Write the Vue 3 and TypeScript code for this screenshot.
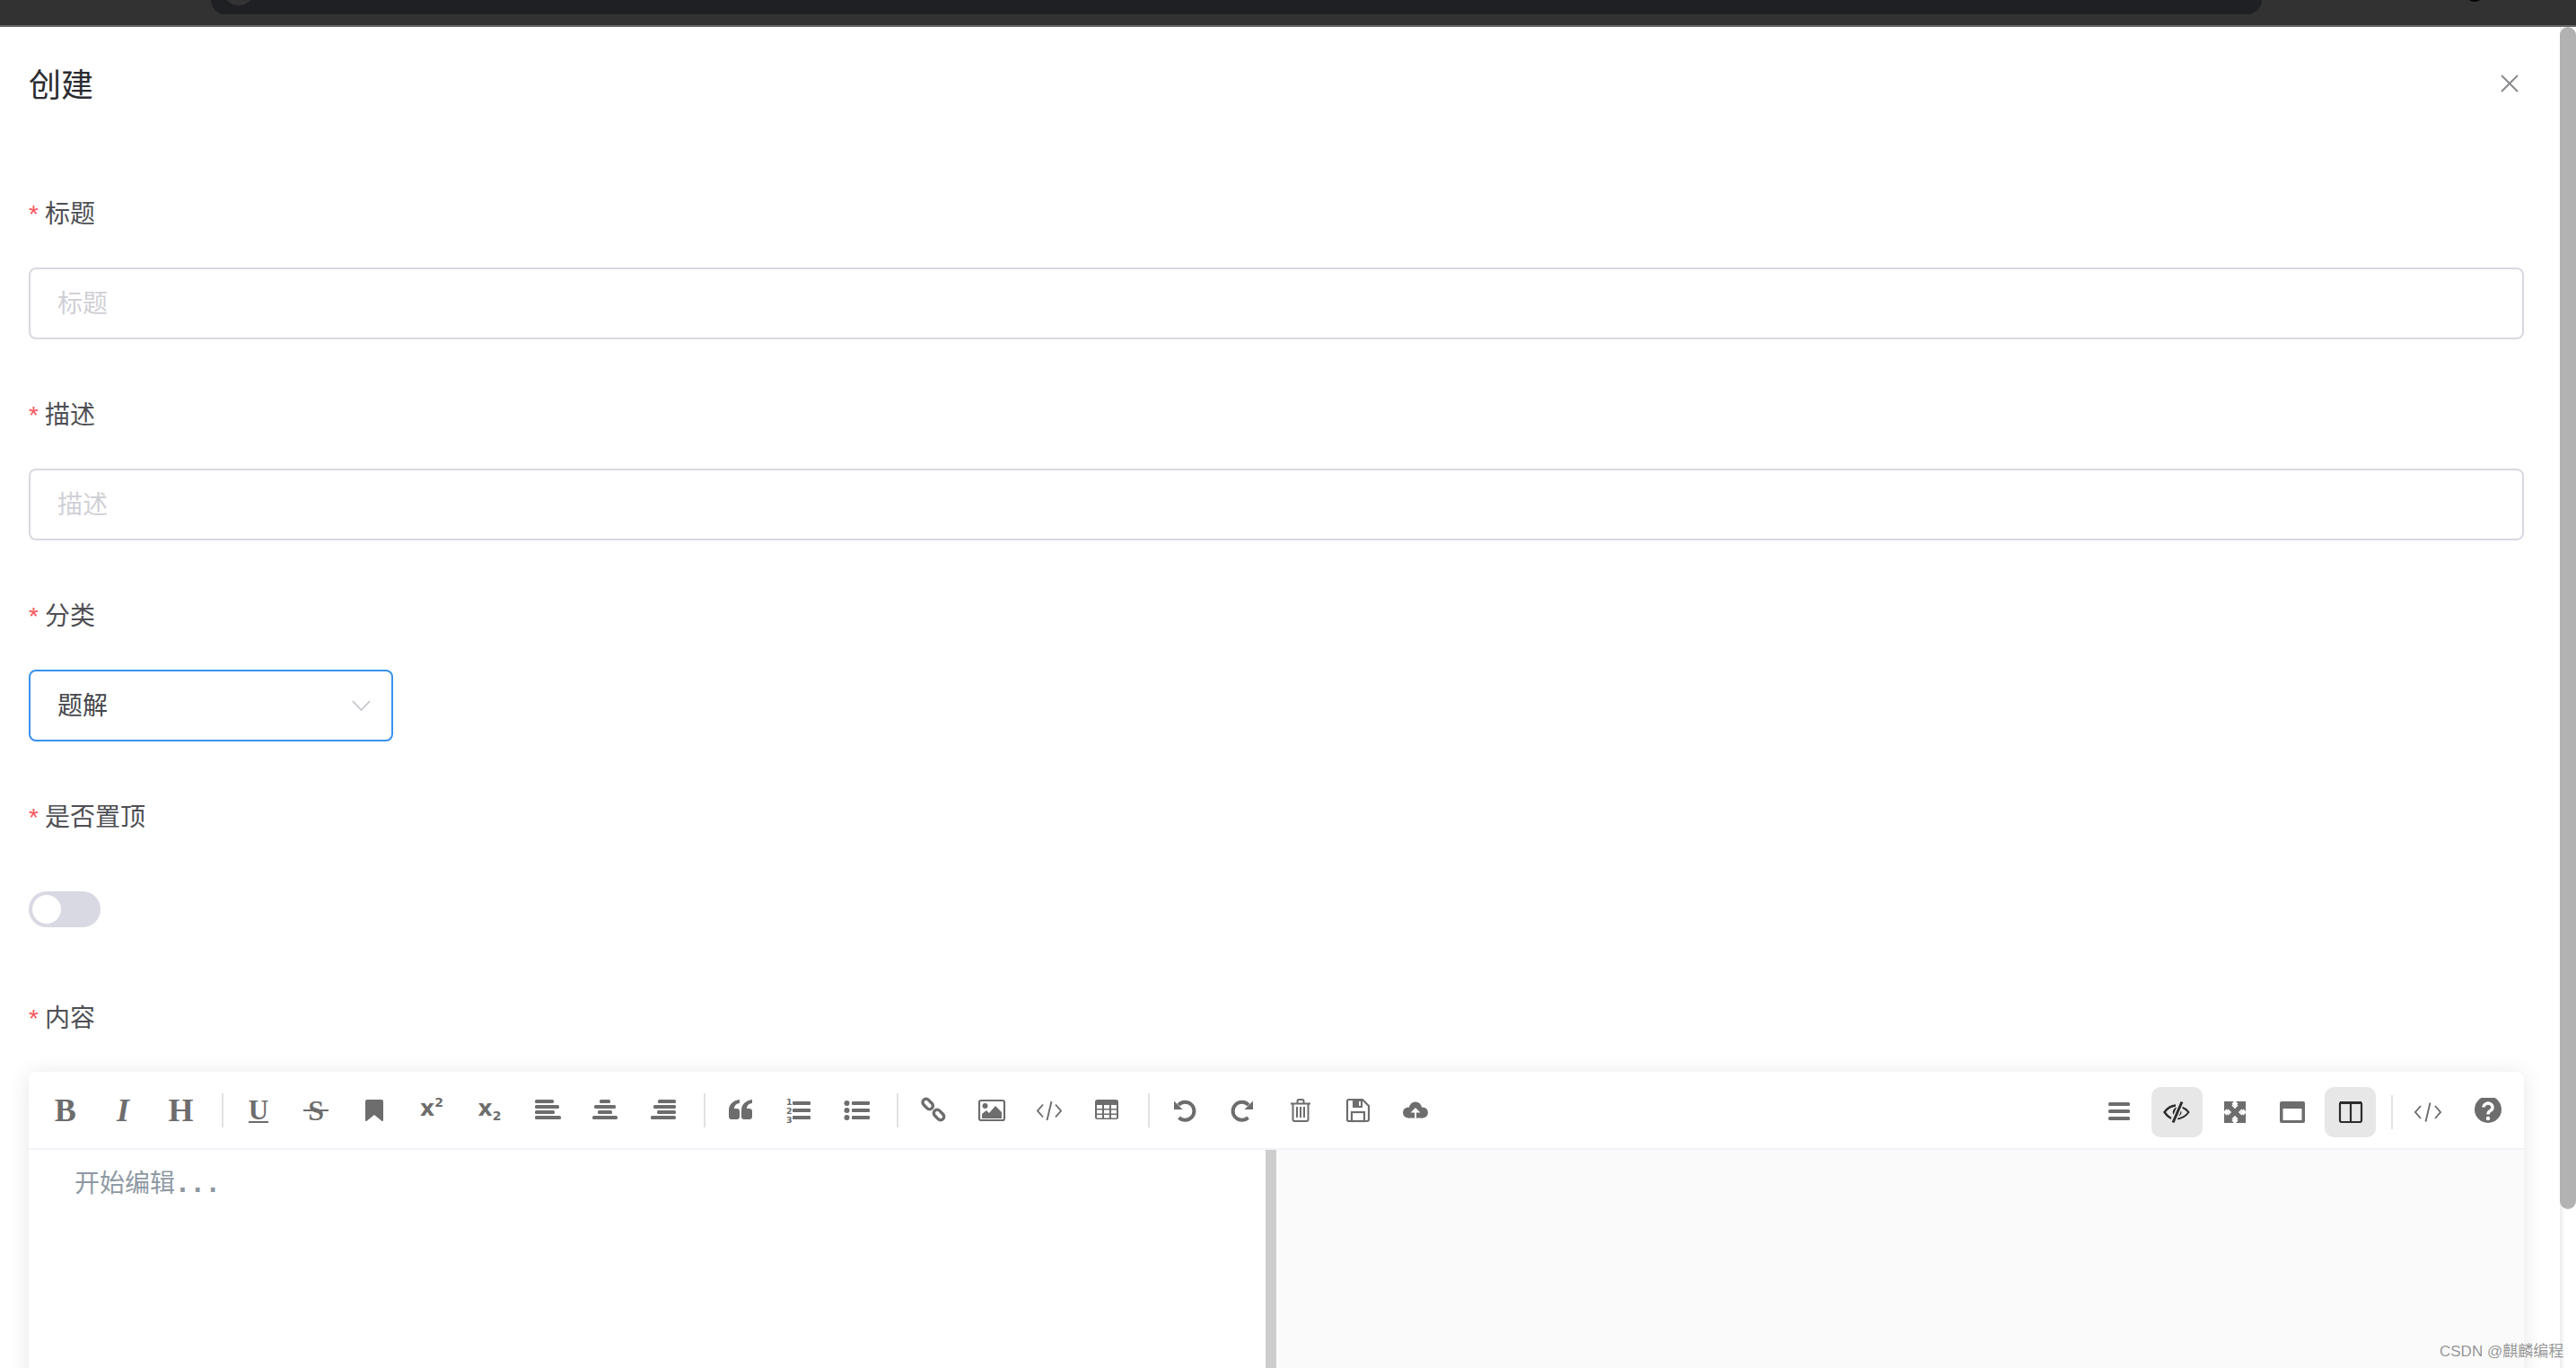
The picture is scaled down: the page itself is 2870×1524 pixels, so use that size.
<script setup lang="ts">
const formFields: { label: string }[] = [{ label: '标题' }, { label: '描述' }]
</script>

<template>
  <div class="page">
    <div class="strip">
      <div class="pill"><span class="pill-dot"></span></div>
      <span class="strip-dot"></span>
    </div>

    <header class="head">
      <h1 class="title">创建</h1>
      <svg class="close" viewBox="0 0 20 20" width="20" height="20">
        <path d="M1 1L19 19M19 1L1 19" />
      </svg>
    </header>

    <main class="form">
      <section v-for="f in formFields" :key="f.label" class="item">
        <label class="label"><span class="star">*</span>{{ f.label }}</label>
        <input class="input" :placeholder="f.label" />
      </section>

      <section class="item">
        <label class="label"><span class="star">*</span>分类</label>
        <div class="select">
          <span class="select-text">题解</span>
          <svg viewBox="0 0 21 12" width="21" height="12" class="chev"><path d="M1 1L10.5 11L20 1" /></svg>
        </div>
      </section>

      <section class="item">
        <label class="label"><span class="star">*</span>是否置顶</label>
        <div class="switch-row">
          <div class="switch"><span class="knob"></span></div>
        </div>
      </section>

      <section class="item last">
        <label class="label"><span class="star">*</span>内容</label>
        <div class="editor">
          <div class="toolbar">
            <div class="group">
              <div class="tb"><span class="serif bold">B</span></div>
              <div class="tb"><span class="serif bold ital">I</span></div>
              <div class="tb"><span class="serif bold">H</span></div>
              <i class="sep"></i>
              <div class="tb"><span class="serif bold under">U</span></div>
              <div class="tb"><span class="serif bold strike">S</span></div>
              <div class="tb">
                <svg class="ic" viewBox="0 0 32 32"><path d="M6 6a2 2 0 0 1 2-2h16a2 2 0 0 1 2 2v21a1 1 0 0 1-1.7.7L16 21l-8.3 6.7A1 1 0 0 1 6 27z" /></svg>
              </div>
              <div class="tb"><span class="script">x<span class="up">2</span></span></div>
              <div class="tb"><span class="script">x<span class="down">2</span></span></div>
              <div class="tb">
                <svg class="ic" viewBox="0 0 32 32"><rect x="2" y="4" width="21" height="4" rx="1.5" /><rect x="2" y="10" width="27" height="4" rx="1.5" /><rect x="2" y="16" width="22" height="4" rx="1.5" /><rect x="2" y="22" width="29" height="4" rx="1.5" /></svg>
              </div>
              <div class="tb">
                <svg class="ic" viewBox="0 0 32 32"><rect x="10" y="4" width="12" height="4" rx="1.5" /><rect x="4" y="10" width="24" height="4" rx="1.5" /><rect x="8" y="16" width="16" height="4" rx="1.5" /><rect x="2" y="22" width="28" height="4" rx="1.5" /></svg>
              </div>
              <div class="tb">
                <svg class="ic" viewBox="0 0 32 32"><rect x="10" y="4" width="20" height="4" rx="1.5" /><rect x="5" y="10" width="25" height="4" rx="1.5" /><rect x="9" y="16" width="21" height="4" rx="1.5" /><rect x="2" y="22" width="28" height="4" rx="1.5" /></svg>
              </div>
              <i class="sep"></i>
              <div class="tb">
                <svg class="ic" viewBox="0 0 32 32">
                  <path d="M15 4C8 5 3 9 3 16v7a3 3 0 0 0 3 3h6a3 3 0 0 0 3-3v-6a3 3 0 0 0-3-3H9c0-3 2-5.5 6-6z" />
                  <path d="M29 4c-7 1-12 5-12 12v7a3 3 0 0 0 3 3h6a3 3 0 0 0 3-3v-6a3 3 0 0 0-3-3h-3c0-3 2-5.5 6-6z" />
                </svg>
              </div>
              <div class="tb">
                <svg class="ic" viewBox="0 0 32 32">
                  <rect x="10" y="6" width="20" height="4" rx="1" /><rect x="10" y="14" width="20" height="4" rx="1" /><rect x="10" y="22" width="20" height="4" rx="1" />
                  <text x="3" y="10" class="num">1</text><text x="3" y="20" class="num">2</text><text x="3" y="30" class="num">3</text>
                </svg>
              </div>
              <div class="tb">
                <svg class="ic" viewBox="0 0 32 32">
                  <circle cx="5.5" cy="8" r="3" /><circle cx="5.5" cy="16" r="3" /><circle cx="5.5" cy="24" r="3" />
                  <rect x="11" y="6" width="20" height="4" rx="1" /><rect x="11" y="14" width="20" height="4" rx="1" /><rect x="11" y="22" width="20" height="4" rx="1" />
                </svg>
              </div>
              <i class="sep"></i>
              <div class="tb">
                <svg class="ic line" viewBox="0 0 32 32" stroke-width="3.4">
                  <rect x="3.2" y="5.2" width="13" height="7.600" rx="3.800" transform="rotate(45 9.700 9)" />
                  <rect x="15.500" y="17.200" width="13" height="7.600" rx="3.800" transform="rotate(45 22 21)" />
                </svg>
              </div>
              <div class="tb">
                <svg class="ic" viewBox="0 0 32 32">
                  <rect x="2" y="5" width="28" height="22" rx="2" class="stroke2" />
                  <circle cx="8.5" cy="11" r="3" />
                  <path d="M5 25v-5l5-4 3 3 7-8 7 7v7z" />
                </svg>
              </div>
              <div class="tb">
                <svg class="ic line" viewBox="0 0 32 32" stroke-width="1.9"><path d="M9 9.5L3 16.5L9 23.5M23 9.5L29 16.5L23 23.5M18.5 6L13.5 27" /></svg>
              </div>
              <div class="tb">
                <svg class="ic" viewBox="0 0 32 32">
                  <rect x="3" y="4" width="26" height="22" rx="2.5" />
                  <g class="cells">
                    <rect x="5" y="10" width="6" height="4" /><rect x="13" y="10" width="6" height="4" /><rect x="21" y="10" width="6" height="4" />
                    <rect x="5" y="15.5" width="6" height="4" /><rect x="13" y="15.5" width="6" height="4" /><rect x="21" y="15.5" width="6" height="4" />
                    <rect x="5" y="21" width="6" height="3.5" /><rect x="13" y="21" width="6" height="3.5" /><rect x="21" y="21" width="6" height="3.5" />
                  </g>
                </svg>
              </div>
              <i class="sep"></i>
              <div class="tb">
                <svg class="ic" viewBox="0 0 32 32">
                  <path d="M9 10A10 10 0 1 1 9.5 24" fill="none" stroke="currentColor" stroke-width="4" />
                  <path d="M4 5.5v9.5h9.5z" />
                </svg>
              </div>
              <div class="tb">
                <svg class="ic" viewBox="0 0 32 32">
                  <path d="M23 10A10 10 0 1 0 22.5 24" fill="none" stroke="currentColor" stroke-width="4" />
                  <path d="M28 5.5v9.5h-9.5z" />
                </svg>
              </div>
              <div class="tb">
                <svg class="ic line" viewBox="0 0 32 32" stroke-width="2">
                  <path d="M5 8.5H27M12.5 8V5.5a1.5 1.5 0 0 1 1.5-1.5h4a1.5 1.5 0 0 1 1.5 1.5V8" />
                  <path d="M7.5 8.5V26a2 2 0 0 0 2 2h13a2 2 0 0 0 2-2V8.5" />
                  <path d="M12 12V24M16 12V24M20 12V24" />
                </svg>
              </div>
              <div class="tb">
                <svg class="ic" viewBox="0 0 32 32">
                  <path class="stroke2" d="M6 4h15l7 7v15a2 2 0 0 1-2 2H6a2 2 0 0 1-2-2V6a2 2 0 0 1 2-2z" />
                  <path d="M10 4h11v9H10zM17 6v5h2V6z" fill-rule="evenodd" />
                  <rect x="9" y="18" width="14" height="10" class="stroke2" />
                </svg>
              </div>
              <div class="tb">
                <svg class="ic" viewBox="0 0 32 32">
                  <circle cx="16" cy="13.500" r="7" /><circle cx="8" cy="18.500" r="6" /><circle cx="24" cy="18.500" r="6" /><rect x="8" y="14" width="16" height="10.500" />
                  <path class="cells" d="M16 13l-5.500 5.500h4.500v6h2v-6h4.500z" />
                </svg>
              </div>
            </div>

            <div class="group right">
              <div class="tb">
                <svg class="ic" viewBox="0 0 32 32"><rect x="4" y="5" width="24" height="4" rx="1.5" /><rect x="4" y="13" width="24" height="4" rx="1.5" /><rect x="4" y="21" width="24" height="4" rx="1.5" /></svg>
              </div>
              <div class="tb on">
                <svg class="ic line" viewBox="0 0 32 32" stroke-width="2.400">
                  <path d="M15 8.500C9 9 5 12.500 2.500 16C4.500 19 7 21.500 10 23" />
                  <path d="M21 10C25 11.500 27.500 13.500 29.500 16C26.500 20 21.500 23 17 23.500" stroke-width="2" />
                  <path d="M17.500 10.500A5.500 5.500 0 0 0 13.500 20z" fill="currentColor" stroke="none" />
                  <path d="M19.500 13.500c1.500 1.500 1.500 3.500 .5 5-1 1-2 1.500-3 1.500" stroke-width="1.400" />
                  <path d="M22 4.500L12 27.500" class="gap" />
                  <path d="M22 4.500L12 27.500" stroke-width="3" />
                </svg>
              </div>
              <div class="tb">
                <svg class="ic" viewBox="0 0 32 32">
                  <path d="M4 4h11l-2.500 2.500 3.500 3.500 3.500-3.500L17 4h11v11l-2.500-2.500-3.500 3.500 3.500 3.500L28 17v11H17l2.500-2.500-3.500-3.500-3.500 3.500L15 28H4V17l2.500 2.500L10 16l-3.500-3.500L4 15z" />
                  <path d="M13 8L16 11L19 8M24 13L21 16L24 19M13 24L16 21L19 24M8 13L11 16L8 19" fill="none" stroke="#fff" stroke-width="1.600" />
                </svg>
              </div>
              <div class="tb">
                <svg class="ic" viewBox="0 0 32 32">
                  <path fill-rule="evenodd" d="M4 4h24a2 2 0 0 1 2 2v20a2 2 0 0 1-2 2H4a2 2 0 0 1-2-2V6a2 2 0 0 1 2-2zM5.500 12v13h21V12z" />
                </svg>
              </div>
              <div class="tb on">
                <svg class="ic line" viewBox="0 0 32 32" stroke-width="2.200">
                  <rect x="4" y="5" width="24" height="22" rx="2" />
                  <path d="M4 5.500H28" stroke-width="3" />
                  <path d="M16 5V27" />
                </svg>
              </div>
              <i class="sep"></i>
              <div class="tb shift">
                <svg class="ic line" viewBox="0 0 32 32" stroke-width="1.900"><path d="M8 9L2 16L8 23M24 9L30 16L24 23M18.500 5.500L13.500 26.500" /></svg>
              </div>
              <div class="tb">
                <svg class="ic" viewBox="0 0 32 32">
                  <circle cx="16" cy="13" r="15" />
                  <path d="M11 10.500a5 4.500 0 1 1 7.500 4c-1.800 1-2.500 1.800-2.500 4" class="q" />
                  <circle cx="16" cy="23" r="2.200" class="cells" />
                </svg>
              </div>
            </div>
          </div>

          <div class="panes">
            <div class="pane-edit"><span>开始编辑</span><span class="dots">...</span></div>
            <div class="pane-bar"></div>
            <div class="pane-view"></div>
          </div>
        </div>
      </section>
    </main>

    <div class="track"></div>
    <div class="thumb"></div>
    <div class="mark">CSDN @麒麟编程</div>
  </div>
</template>

<style>
html, body { margin: 0; overflow: hidden; background: #fff; }
</style>

<style scoped>
.page {
  position: relative;
  width: 2870px;
  height: 1524px;
  overflow: hidden;
  display: flex;
  flex-direction: column;
  background: #fff;
  font-family: "Noto Sans CJK SC", "Noto Sans", sans-serif;
  font-size: 28px;
}
.strip {
  position: relative;
  height: 28px;
  flex: none;
  background: #323232;
  border-bottom: 2px solid #666;
  display: flex;
  justify-content: flex-start;
  padding-left: 235px;
}
.pill {
  position: relative;
  width: 2285px;
  height: 16px;
  background: #1f2023;
  border-radius: 0 0 30px 30px;
  overflow: hidden;
}
.pill-dot {
  position: absolute;
  left: 13px;
  top: -30px;
  width: 36px;
  height: 36px;
  border-radius: 50%;
  background: #333;
}
.strip-dot {
  position: absolute;
  left: 2747px;
  top: -18px;
  width: 20px;
  height: 20px;
  border-radius: 50%;
  background: #000;
}
.head {
  flex: none;
  height: 128px;
  display: flex;
  align-items: center;
  justify-content: space-between;
  padding: 0 64px 0 32px;
}
.title {
  margin: 0 0 5px;
  font-size: 36px;
  font-weight: 400;
  line-height: 50px;
  color: #2b2c2f;
}
.close { margin-bottom: 2px; }
.close path {
  fill: none;
  stroke: #8a8a8e;
  stroke-width: 2;
}
.form {
  flex: 1;
  min-height: 0;
  padding: 58px 58px 0 32px;
}
.item { margin-bottom: 62px; }
.item.last { margin-bottom: 0; }
.label {
  display: block;
  height: 44px;
  line-height: 40px;
  margin-bottom: 38px;
  color: #4e4f54;
}
.star {
  font-family: "Liberation Sans", sans-serif;
  color: #f9565e;
  margin-right: 7px;
}
.input {
  display: block;
  box-sizing: border-box;
  width: 100%;
  height: 80px;
  padding: 0 30px 4px;
  border: 2px solid #d9d9e4;
  border-radius: 8px;
  outline: none;
  font: inherit;
  color: #333;
  background: #fff;
}
.input::placeholder { color: #d0d0d6; opacity: 1; }
.select {
  box-sizing: border-box;
  width: 406px;
  height: 80px;
  padding: 0 23px 0 30px;
  border: 2px solid #3a92f0;
  border-radius: 8px;
  display: flex;
  align-items: center;
  justify-content: space-between;
  color: #45474c;
}
.select-text { margin-bottom: 4px; }
.chev path { fill: none; stroke: #c0c1c9; stroke-width: 1.6; }
.switch-row { height: 80px; }
.switch {
  position: relative;
  top: 23px;
  width: 80px;
  height: 40px;
  border-radius: 20px;
  background: #d8d9e3;
}
.knob {
  position: absolute;
  left: 4px;
  top: 4px;
  width: 32px;
  height: 32px;
  border-radius: 50%;
  background: #fff;
}
.editor {
  height: 700px;
  border-radius: 8px 8px 0 0;
  background: #fff;
  box-shadow: 0 2px 24px rgba(0, 0, 0, 0.1);
  display: flex;
  flex-direction: column;
}
.toolbar {
  flex: none;
  height: 85px;
  border-bottom: 2px solid #f0f4f9;
  display: flex;
  justify-content: space-between;
  padding: 0 8px 0 8.500px;
  color: #6d6d6d;
}
.group { display: flex; align-items: center; }
.group.right { padding-top: 5px; }
.tb {
  width: 64.400px;
  height: 56px;
  flex: none;
  display: flex;
  align-items: center;
  justify-content: center;
  line-height: 1;
  position: relative;
}
.tb.shift { margin-right: 2.500px; }
.tb.on { color: #2c2c2c; }
.tb.on::before {
  content: "";
  position: absolute;
  inset: 0 4px;
  background: #e7e7e7;
  border-radius: 10px;
}
.tb.on svg { position: relative; }
.sep {
  flex: none;
  width: 2px;
  height: 38px;
  margin: 0 7px 0 13px;
  background: #e2e2e2;
}
.ic { width: 32px; height: 32px; fill: currentColor; display: block; }
.ic.line { fill: none; stroke: currentColor; }
.stroke2 { fill: none; stroke: currentColor; stroke-width: 2.200; }
.cells { fill: #fff; }
.gap { stroke: #e7e7e7; stroke-width: 6; }
.q { fill: none; stroke: #fff; stroke-width: 3.400; }
.num {
  font-family: "DejaVu Sans", sans-serif;
  font-weight: 700;
  font-size: 9.500px;
}
.serif {
  font-family: "Liberation Serif", serif;
  font-size: 36px;
  line-height: 36px;
}
.bold { font-weight: 700; }
.ital { font-style: italic; }
.under {
  font-size: 31px;
  line-height: 25px;
  border-bottom: 2px solid currentColor;
  margin-top: 2px;
}
.strike { position: relative; font-size: 32px; }
.strike::after {
  content: "";
  position: absolute;
  left: -5px;
  right: -5px;
  top: 17px;
  height: 2px;
  background: currentColor;
}
.script {
  font-family: "DejaVu Sans", sans-serif;
  font-weight: 700;
  font-size: 25px;
  line-height: 32px;
}
.up, .down { font-size: 14px; position: relative; }
.up { top: -10px; }
.down { top: 5px; }
.panes {
  flex: 1;
  display: flex;
  min-height: 0;
}
.pane-edit {
  width: 1378px;
  flex: none;
  box-sizing: border-box;
  padding: 15px 0 0 51px;
  line-height: 40px;
  color: #8e99a3;
}
.dots {
  font-family: "DejaVu Sans Mono", monospace;
  font-weight: 700;
}
.pane-bar { width: 12px; flex: none; background: #cdcdcd; }
.pane-view { flex: 1; background: #fafafa; }
.track {
  position: absolute;
  top: 30px;
  right: 0;
  bottom: 0;
  width: 18px;
  background: linear-gradient(90deg, #ececec, #fff 6px);
}
.thumb {
  position: absolute;
  top: 30px;
  right: 0;
  width: 18px;
  height: 1317px;
  border-radius: 9px;
  background: #b2b2b2;
}
.mark {
  position: absolute;
  left: 2718px;
  top: 1494px;
  font-family: "Liberation Sans", "Noto Sans CJK SC", sans-serif;
  font-size: 17px;
  line-height: 24px;
  white-space: nowrap;
  color: rgba(90, 90, 90, 0.65);
}
</style>
